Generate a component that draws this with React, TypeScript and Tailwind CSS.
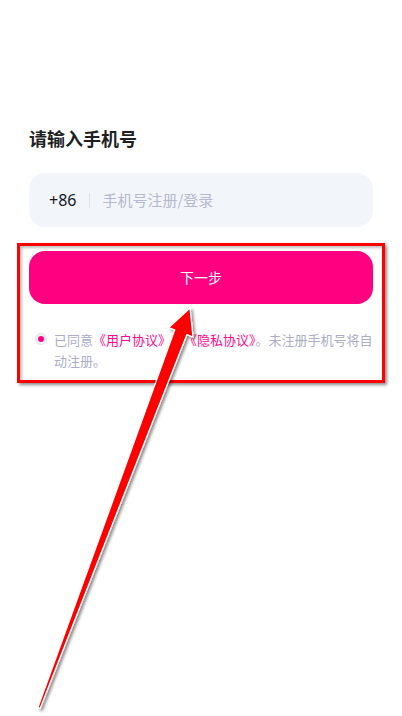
import React from "react";

const FONT = { fontFamily: '"Noto Sans CJK SC", "Noto Sans", sans-serif' };

function Agreement() {
  return (
    <div className="mt-[25px] flex items-start gap-[7px] pl-[6px]">
      <div className="mt-[4px] w-[12px] h-[12px] rounded-full bg-[#f1f1f8] border border-[#e2e2ee] flex items-center justify-center shrink-0">
        <div className="w-[6px] h-[6px] rounded-full bg-[#ff0080]" />
      </div>
      <p className="text-[13px] leading-[21px] text-[#abadc6]">
        已同意<span className="text-[#ff0a8c]">《用户协议》</span>和<span className="text-[#ff0a8c]">《隐私协议》</span>。未注册手机号将自动注册。
      </p>
    </div>
  );
}

function Arrow() {
  return (
    <svg
      className="absolute inset-0 pointer-events-none"
      width={402}
      height={716}
      viewBox="0 0 402 716"
    >
      <defs>
        <filter id="arrowShadow" x="-20%" y="-20%" width="140%" height="140%">
          <feDropShadow dx="2" dy="2" stdDeviation="1.5" floodColor="#000" floodOpacity="0.45" />
        </filter>
      </defs>
      <polygon
        points="190,308 193,337 186.9,334.6 40.1,708.4 37.9,707.6 174.7,330 168.6,327.7"
        fill="#ff0000"
        stroke="#ffffff"
        strokeWidth={1.3}
        strokeLinejoin="miter"
        filter="url(#arrowShadow)"
      />
    </svg>
  );
}

export default function App() {
  return (
    <div className="relative w-full h-[716px] bg-white overflow-hidden" style={FONT}>
      <div className="px-[29px] pt-[125px]">
        <h1 className="text-[18px] leading-[26px] font-semibold text-[#1f1f24]">请输入手机号</h1>

        <div className="mt-[22px] h-[54px] rounded-[16px] bg-[#f2f5f9] flex items-center pl-[20px]">
          <span className="text-[16px] text-[#15172a]" style={{ fontFamily: '"Noto Sans", sans-serif' }}>
            +86
          </span>
          <div className="ml-[13px] w-px h-[15px] bg-[#e0e3ea]" />
          <span className="ml-[12px] text-[15px] text-[#b6b8cf]">手机号注册/登录</span>
        </div>

        <button className="mt-[24px] w-full h-[53px] rounded-[16px] bg-[#ff0080] text-white text-[14px] flex items-center justify-center">
          下一步
        </button>

        <Agreement />
      </div>

      {/* annotation box */}
      <div className="absolute left-[17px] top-[243px] w-[368px] h-[140px] border-[3px] border-[#ff0000] shadow-[2px_2px_3px_rgba(0,0,0,0.45),inset_2px_2px_3px_rgba(0,0,0,0.25)] pointer-events-none" />

      <Arrow />
    </div>
  );
}
